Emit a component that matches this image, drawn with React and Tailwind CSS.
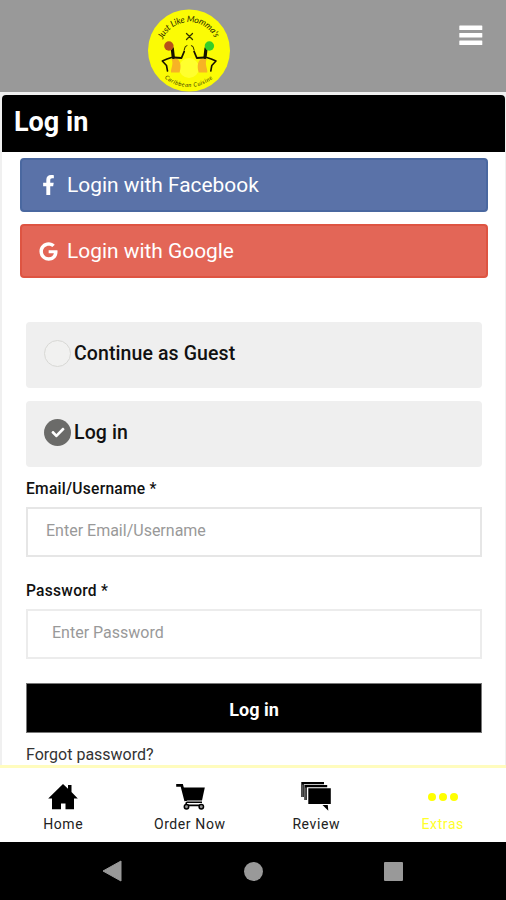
import { FaCheck, FaFacebookF, FaGoogle } from 'react-icons/fa';

const Dancer = () => (
  <g fill="none" stroke="#141000" strokeLinecap="round" strokeLinejoin="round">
    <path d="M24.5 51 L30 50.5 C34.5 54 34 60 32.5 64.5 L24 64.5 C23.5 61 27 56 24.5 51 Z" fill="#f7b325" stroke="none" />
    <path d="M25.3 40.5 L26.3 49.5" strokeWidth="3.2" />
    <path d="M24.5 49.5 L20 51 L15.3 53 L19.5 57.5 L20.5 63" strokeWidth="1.6" />
    <path d="M27 49.5 L34.5 50 L37.2 43.5" strokeWidth="1.8" />
    <path d="M37.2 42 L38.3 38.5 L40 37.7" strokeWidth="0.9" />
  </g>
);

const Logo = () => (
  <svg viewBox="0 0 84 84" className="h-[84px] w-[84px]">
    <defs>
      <path id="topArc" d="M15.8 31.5 A28.5 28.5 0 0 1 70 37" />
      <path id="bottomArc" d="M17.5 70 A38 38 0 0 0 66.5 70" />
    </defs>
    <circle cx="42" cy="42.5" r="41" fill="#fbfb05" />
    <circle cx="42" cy="60" r="10" fill="#ffff2e" />
    <text fontFamily="Lato, sans-serif" fontStyle="italic" fontSize="8.8" fill="#2b2b00">
      <textPath href="#topArc" textLength="65">Just Like Momma's</textPath>
    </text>
    <path d="M39.5 25.5 L45.5 31.5 M45.5 25.5 L39.5 31.5" stroke="#333300" strokeWidth="1.3" strokeLinecap="round" />
    <Dancer />
    <g transform="translate(84.3 0) scale(-1 1)">
      <Dancer />
    </g>
    <circle cx="21.9" cy="38" r="4.7" fill="#b8501a" />
    <circle cx="62.4" cy="38" r="4.7" fill="#35cf28" />
    <text fontFamily="Lato, sans-serif" fontStyle="italic" fontSize="5.8" fill="#3a3a00">
      <textPath href="#bottomArc" textLength="52">Caribbean Cuisine</textPath>
    </text>
  </svg>
);

const MenuIcon = () => (
  <svg viewBox="0 0 24 22" className="h-[22px] w-6" fill="#ffffff">
    <rect x="0.3" y="0.5" width="23" height="4.6" rx="0.6" />
    <rect x="0.3" y="8" width="23" height="4.6" rx="0.6" />
    <rect x="0.3" y="15.5" width="23" height="4.6" rx="0.6" />
  </svg>
);

const HomeIcon = () => (
  <svg viewBox="0 0 30 30" className="h-[30px] w-[30px]">
    <path d="M15 2 L20 6.8 V3 H23.5 V10 L29.8 16.5 H26 V27.3 H17.5 V21.5 H13 V27.3 H4 V16.5 H0.2 Z" />
  </svg>
);

const CartIcon = () => (
  <svg viewBox="0 0 30 30" className="h-[30px] w-[30px]">
    <path d="M1.2 3.4 H6.8 L10.8 19" fill="none" stroke="#000" strokeWidth="2.8" />
    <path d="M7.5 5.6 H29.8 L27 18.6 H10.5 Z" />
    <path d="M11.5 20.3 H27 M11.5 20.3 L10.8 23.4 H26" fill="none" stroke="#000" strokeWidth="1.6" />
    <circle cx="11.5" cy="24.8" r="2.2" fill="#999" stroke="#000" strokeWidth="1.5" />
    <circle cx="26.3" cy="24.8" r="2.2" fill="#999" stroke="#000" strokeWidth="1.5" />
  </svg>
);

const ReviewIcon = () => (
  <svg viewBox="0 0 30 30" className="h-[30px] w-[30px]">
    <path d="M0.3 0 H23 V2.2 H2.8 V15 H0.3 Z" />
    <path d="M3.4 3 H26.2 V5.2 H5.8 V18 H3.4 Z" />
    <path d="M1.6 2.5 V15 M4.7 5.5 V18" stroke="#777" strokeWidth="0.8" />
    <path d="M7.3 6.3 H29.8 V22 H7.3 Z M21.5 23 H26.8 L27.3 28.8 Z" />
  </svg>
);

const DotsIcon = () => (
  <svg viewBox="0 0 30 30" className="h-[30px] w-[30px]" fill="#ffff00">
    <circle cx="4" cy="15" r="4" />
    <circle cx="15" cy="15" r="4" />
    <circle cx="26" cy="15" r="4" />
  </svg>
);

const tabs = [
  { label: 'Home', icon: HomeIcon },
  { label: 'Order Now', icon: CartIcon },
  { label: 'Review', icon: ReviewIcon },
  { label: 'Extras', icon: DotsIcon, active: true },
];

const App = () => {
  return (
    <div className="flex h-[900px] w-[506px] flex-col overflow-hidden bg-white font-['Roboto',sans-serif] text-black">
      <header className="flex h-[92px] shrink-0 items-start justify-between bg-[#999999] pr-[23px] pl-[147px] pt-2">
        <Logo />
        <button className="mt-[17px]" aria-label="Menu">
          <MenuIcon />
        </button>
      </header>

      <main className="h-[673px] shrink-0 overflow-hidden bg-[#f0f0f0] pt-[3px] pr-px pl-[2px]">
        <div className="h-full overflow-hidden rounded-t bg-white">
          <h1 className="h-[57px] bg-black pl-3 text-[27px] leading-[54px] font-bold text-white">Log in</h1>

          <div className="flex flex-col gap-3 pt-[6px] pr-[17px] pl-[18px]">
            <button className="flex h-[54px] items-center rounded border-2 border-[#4a68a0] bg-[#5a72a8] pl-[17px] text-[20.9px] text-white">
              <FaFacebookF className="mr-[9px] h-5 w-[19px]" />
              <span className="pt-px">Login with Facebook</span>
            </button>
            <button className="flex h-[54px] items-center rounded border-2 border-[#de5442] bg-[#e36657] pl-[17px] text-[20.9px] text-white">
              <FaGoogle className="mr-[9px] h-[19px] w-[19px]" />
              <span className="pt-px">Login with Google</span>
            </button>
          </div>

          <form className="flex flex-col pt-11 pr-[23px] pl-6">
            <label className="flex h-[66px] items-center rounded-sm bg-[#efefef] pb-[3px] pl-[18px] text-[19.5px] font-medium tracking-[0.1px] text-[#111111]">
              <span className="mr-[3px] h-[27px] w-[27px] rounded-full border border-[#d8d8d5] bg-[#f1f1f0]" />
              Continue as Guest
            </label>
            <label className="mt-[13px] flex h-[66px] items-center rounded-sm bg-[#efefef] pb-[3px] pl-[18px] text-[19.5px] font-medium tracking-[0.1px] text-[#111111]">
              <span className="mr-[3px] flex h-[27px] w-[27px] items-center justify-center rounded-full bg-[#6b6b69]">
                <FaCheck className="h-[13px] w-[14px] text-white" />
              </span>
              Log in
            </label>

            <label
              className="mt-[11px] h-[29px] text-[15.6px] leading-[22px] font-medium tracking-[0.25px] text-[#111111]"
              htmlFor="email"
            >
              Email/Username *
            </label>
            <input
              id="email"
              className="h-[50px] border-2 border-[#e6e6e6] pb-[3px] pl-[18px] text-[16px] placeholder:text-[#999999]"
              placeholder="Enter Email/Username"
            />
            <label
              className="mt-[23px] h-[29px] text-[15.6px] leading-[22px] font-medium tracking-[0.25px] text-[#111111]"
              htmlFor="password"
            >
              Password *
            </label>
            <input
              id="password"
              type="password"
              className="h-[50px] border-2 border-[#ececec] pb-[3px] pl-6 text-[16px] placeholder:text-[#999999]"
              placeholder="Enter Password"
            />

            <button
              type="button"
              className="mt-6 h-[50px] border border-[#777777] bg-black pt-[2px] text-[18px] font-bold text-white"
            >
              Log in
            </button>
            <a className="mt-[11px] text-[16px] leading-[22px] text-[#333333]">Forgot password?</a>
          </form>
        </div>
      </main>

      <nav className="grid h-[77px] shrink-0 grid-cols-4 border-t-[3px] border-[#fffcbe] bg-white">
        {tabs.map(({ label, icon: Icon, active }) => (
          <button
            key={label}
            className={`flex flex-col items-center pt-[14px] text-[14px] leading-[20px] tracking-[0.6px] ${
              active ? 'text-[#ffff2a]' : 'text-[#222222]'
            }`}
          >
            <Icon />
            <span className="mt-[2px]">{label}</span>
          </button>
        ))}
      </nav>

      <footer className="flex h-[58px] shrink-0 items-center bg-black pl-[102px]">
        <svg viewBox="0 0 20 22" className="h-[22px] w-5" fill="#999999">
          <path d="M1 11 L19 1 V21 Z" stroke="#999999" strokeLinejoin="round" />
        </svg>
        <span className="ml-[122px] h-[19px] w-[19px] rounded-full bg-[#999999]" />
        <span className="ml-[121px] h-[19px] w-[19px] rounded-[1px] bg-[#999999]" />
      </footer>
    </div>
  );
};

export default App;
